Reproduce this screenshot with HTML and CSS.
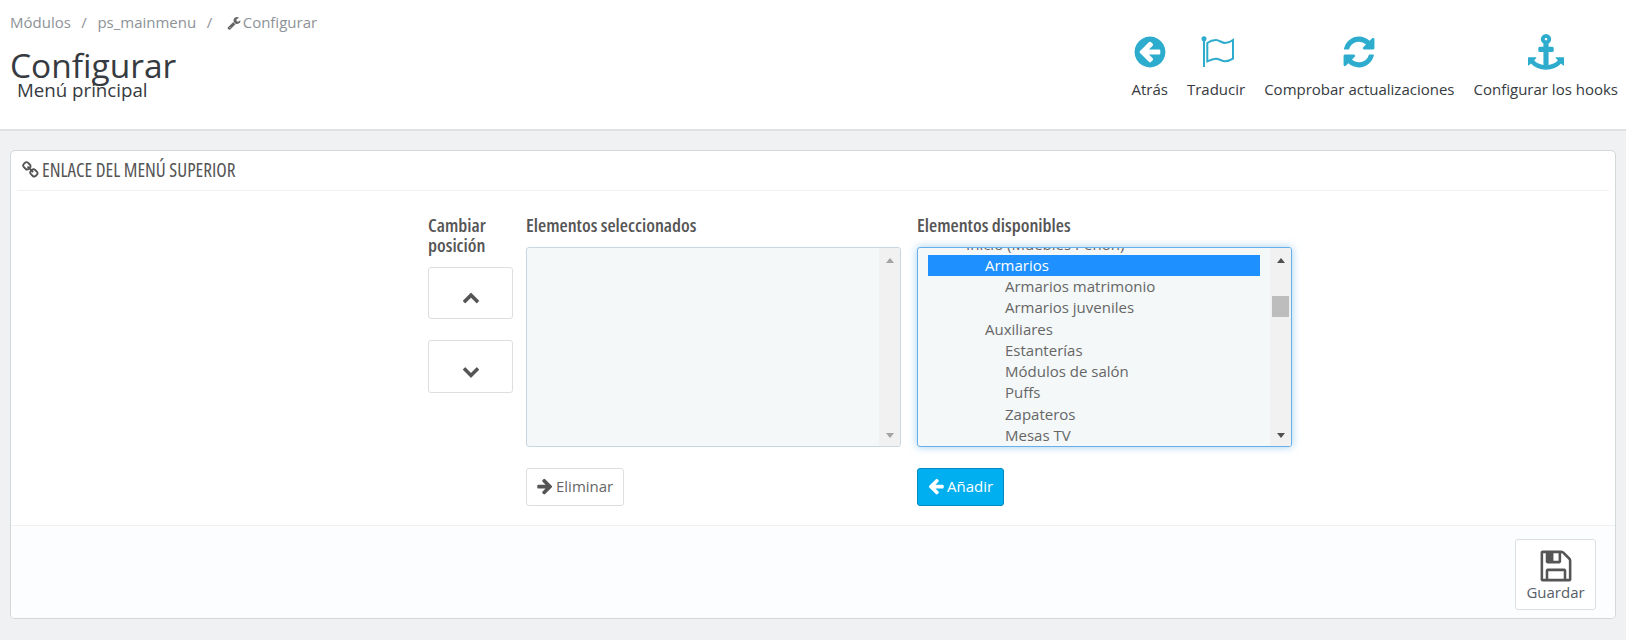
FILE: index.html
```html
<!DOCTYPE html>
<html lang="es">
<head>
<meta charset="utf-8">
<title>Configurar</title>
<link rel="stylesheet" href="styles.css">
</head>
<body>
<header class="page-head">
  <div class="head-left">
    <nav class="crumbs">
      <span>Módulos</span><span class="sep">/</span><span>ps_mainmenu</span><span class="sep">/</span>
      <span class="crumb-cur"><svg class="ico-wrench" viewBox="0 0 1792 1792"><path d="M448 1472q0-26-19-45t-45-19-45 19-19 45 19 45 45 19 45-19 19-45zm644-420l-682 682q-37 37-90 37-52 0-91-37l-106-108q-38-36-38-90 0-53 38-91l681-681q39 98 114.5 173.5t173.5 114.5zm634-435q0 39-23 106-47 134-164.5 217.5t-258.5 83.5q-185 0-316.5-131.5t-131.5-316.5 131.5-316.5 316.5-131.5q58 0 121.5 16.5t107.5 46.5q16 11 16 28t-16 28l-293 169v224l193 107q5-3 79-48.5t135.5-81 70.5-35.5q15 0 23.5 10t8.5 25z"/></svg>Configurar</span>
    </nav>
    <h1 class="title">Configurar</h1>
    <p class="subtitle">Menú principal</p>
  </div>
  <ul class="toolbar">
    <li class="tool">
      <svg class="tool-ico" viewBox="0 0 1792 1792"><path d="M1408 960v-128q0-26-19-45t-45-19h-502l189-189q19-19 19-45t-19-45l-91-91q-18-18-45-18t-45 18l-362 362-91 91q-18 18-18 45t18 45l91 91 362 362q18 18 45 18t45-18l91-91q18-18 18-45t-18-45l-189-189h502q26 0 45-19t19-45zm256-64q0 209-103 385.5t-279.5 279.5-385.5 103-385.5-103-279.5-279.5-103-385.5 103-385.5 279.5-279.5 385.5-103 385.5 103 279.5 279.5 103 385.5z"/></svg>
      <span>Atrás</span>
    </li>
    <li class="tool">
      <svg class="tool-ico" viewBox="0 0 36 36"><circle cx="6" cy="4.700" r="2.500" class="flag-dot"/><path class="flag-line" d="M6 5v28"/><path class="flag-line" d="M9.300 9C12 7 15 6 18 6s6 3 9 3 6-1.500 8-3v18.700c-2 1.300-5 2.600-8 2.600s-6-2.600-9-2.600-6 1.300-8.700 2.600z"/></svg>
      <span>Traducir</span>
    </li>
    <li class="tool">
      <svg class="tool-ico" viewBox="0 0 1792 1792"><path d="M1639 1056q0 5-1 7-64 268-268 434.5t-478 166.5q-146 0-282.5-55t-243.5-157l-129 129q-19 19-45 19t-45-19-19-45v-448q0-26 19-45t45-19h448q26 0 45 19t19 45-19 45l-137 137q71 66 161 102t187 36q134 0 250-65t186-179q11-17 53-117 8-23 30-23h192q13 0 22.500 9.500t9.500 22.500zm25-800v448q0 26-19 45t-45 19h-448q-26 0-45-19t-19-45 19-45l138-138q-148-137-349-137-134 0-250 65t-186 179q-11 17-53 117-8 23-30 23h-199q-13 0-22.500-9.500t-9.500-22.500v-7q65-268 270-434.500t480-166.500q146 0 284 55.500t245 156.500l130-129q19-19 45-19t45 19 19 45z"/></svg>
      <span>Comprobar actualizaciones</span>
    </li>
    <li class="tool">
      <svg class="tool-ico" viewBox="0 0 1792 1792"><path d="M960 256q0-26-19-45t-45-19-45 19-19 45 19 45 45 19 45-19 19-45zm832 928v352q0 22-20 30-8 2-12 2-12 0-23-9l-93-93q-119 143-318.500 226.500t-429.500 83.500-429.500-83.500-318.500-226.500l-93 93q-9 9-23 9-4 0-12-2-20-8-20-30v-352q0-14 9-23t23-9h352q22 0 30 20 8 19-7 35l-100 100q67 91 189.500 153.500t271.500 82.500v-647h-192q-26 0-45-19t-19-45v-128q0-26 19-45t45-19h192v-163q-58-34-93-92.500t-35-128.500q0-106 75-181t181-75 181 75 75 181q0 70-35 128.500t-93 92.500v163h192q26 0 45 19t19 45v128q0 26-19 45t-45 19h-192v647q149-20 271.500-82.500t189.500-153.500l-100-100q-15-16-7-35 8-20 30-20h352q14 0 23 9t9 23z"/></svg>
      <span>Configurar los hooks</span>
    </li>
  </ul>
</header>

<main class="content">
  <section class="panel">
    <div class="panel-head">
      <svg class="ico-link" viewBox="0 0 1792 1792"><path d="M1456 1216q0-40-28-68l-208-208q-28-28-68-28-42 0-72 32 3 3 19 18.500t21.500 21.500 15 19 13 25.500 3.500 27.500q0 40-28 68t-68 28q-15 0-27.500-3.500t-25.500-13-19-15-21.500-21.500-18.500-19q-33 31-33 73 0 40 28 68l206 207q27 27 68 27 40 0 68-26l147-146q28-28 28-67zm-703-705q0-40-28-68l-206-207q-28-28-68-28-39 0-68 27l-147 146q-28 28-28 67 0 40 28 68l208 208q27 27 68 27 42 0 72-31-3-3-19-18.500t-21.500-21.500-15-19-13-25.500-3.500-27.500q0-40 28-68t68-28q15 0 27.500 3.500t25.500 13 19 15 21.500 21.500 18.500 19q33-31 33-73zm895 705q0 120-85 203l-147 146q-83 83-203 83-121 0-204-85l-206-207q-83-83-83-203 0-123 88-209l-88-88q-86 88-208 88-120 0-204-84l-208-208q-84-84-84-204t85-203l147-146q83-83 203-83 121 0 204 85l206 207q83 83 83 203 0 123-88 209l88 88q86-88 208-88 120 0 204 84l208 208q84 84 84 204z"/></svg>
      <span>ENLACE DEL MENÚ SUPERIOR</span>
    </div>
    <div class="panel-body">
      <div class="col-move">
        <div class="col-label">Cambiar posición</div>
        <button class="move-btn" type="button"><svg class="ico-chev" viewBox="0 0 1792 1792"><path d="M1683 1331l-166 165q-19 19-45 19t-45-19l-531-531-531 531q-19 19-45 19t-45-19l-166-165q-19-19-19-45.500t19-45.500l742-741q19-19 45-19t45 19l742 741q19 19 19 45.500t-19 45.500z"/></svg></button>
        <button class="move-btn" type="button"><svg class="ico-chev" viewBox="0 0 1792 1792"><path d="M1683 808l-742 741q-19 19-45 19t-45-19l-742-741q-19-19-19-45.500t19-45.500l166-165q19-19 45-19t45 19l531 531 531-531q19-19 45-19t45 19l166 165q19 19 19 45.500t-19 45.500z"/></svg></button>
      </div>
      <div class="col-list">
        <div class="list-label">Elementos seleccionados</div>
        <div class="listbox">
          <div class="list-view"></div>
          <div class="sb sb-off"><span class="sb-up"></span><span class="sb-down"></span></div>
        </div>
        <button class="btn" type="button"><svg class="ico-arrow" viewBox="0 0 1792 1792"><path d="M1600 960q0 54-37 91l-651 651q-39 37-91 37-51 0-90-37l-75-75q-38-38-38-91t38-91l293-293h-704q-52 0-84.500-37.500t-32.500-90.500v-128q0-53 32.500-90.500t84.500-37.500h704l-293-294q-38-36-38-90t38-90l75-75q38-38 90-38 53 0 91 38l651 651q37 35 37 90z"/></svg>Eliminar</button>
      </div>
      <div class="col-list">
        <div class="list-label">Elementos disponibles</div>
        <div class="listbox listbox-focus">
          <ul class="list-view options">
            <li class="lvl1">Inicio (Muebles Peñón)</li>
            <li class="lvl2 selected">Armarios</li>
            <li class="lvl3">Armarios matrimonio</li>
            <li class="lvl3">Armarios juveniles</li>
            <li class="lvl2">Auxiliares</li>
            <li class="lvl3">Estanterías</li>
            <li class="lvl3">Módulos de salón</li>
            <li class="lvl3">Puffs</li>
            <li class="lvl3">Zapateros</li>
            <li class="lvl3">Mesas TV</li>
          </ul>
          <div class="sb"><span class="sb-up"></span><span class="sb-thumb"></span><span class="sb-down"></span></div>
        </div>
        <button class="btn btn-primary" type="button"><svg class="ico-arrow" viewBox="0 0 1792 1792"><path d="M1664 896v128q0 53-32.500 90.500t-84.500 37.500h-704l293 294q38 36 38 90t-38 90l-75 76q-37 37-90 37-52 0-91-37l-651-652q-37-37-37-90 0-52 37-91l651-650q38-38 91-38 52 0 90 38l75 74q38 38 38 91t-38 91l-293 293h704q52 0 84.500 37.500t32.500 90.500z"/></svg>Añadir</button>
      </div>
    </div>
    <div class="panel-foot">
      <button class="save-btn" type="button">
        <svg class="ico-save" viewBox="0 0 1792 1792"><path d="M512 1536h768v-384h-768v384zm896 0h128v-896q0-14-10-38.500t-20-34.500l-281-281q-10-10-34-20t-39-10v416q0 40-28 68t-68 28h-576q-40 0-68-28t-28-68v-416h-128v1280h128v-416q0-40 28-68t68-28h832q40 0 68 28t28 68v416zm-384-928v-320q0-13-9.500-22.500t-22.500-9.500h-192q-13 0-22.500 9.500t-9.500 22.500v320q0 13 9.500 22.500t22.500 9.500h192q13 0 22.500-9.500t9.500-22.500zm640 32v928q0 40-28 68t-68 28h-1344q-40 0-68-28t-28-68v-1344q0-40 28-68t68-28h928q40 0 88 20t76 48l280 280q28 28 48 76t20 88z"/></svg>
        <span>Guardar</span>
      </button>
    </div>
  </section>
</main>
</body>
</html>
```
FILE: styles.css
```css
* { box-sizing: border-box; }
html, body { margin: 0; padding: 0; }
body {
  width: 1626px;
  height: 640px;
  overflow: hidden;
  background: #eff1f2;
  color: #363a41;
  font-family: "Open Sans", sans-serif;
  font-size: 15px;
}
ul { list-style: none; margin: 0; padding: 0; }

.page-head {
  height: 131px;
  background: #fff;
  border-bottom: 2px solid #dfe1e2;
  display: flex;
  justify-content: space-between;
  padding: 12px 8px 0 10px;
}
.crumbs {
  display: flex;
  align-items: center;
  height: 21px;
  color: #8d9298;
  line-height: 21px;
}
.sep { margin: 0 10.500px; color: #8d9298; }
.crumb-cur { margin-left: 4px; display: flex; align-items: center; }
.ico-wrench { width: 14px; height: 14px; fill: #666; margin-right: 2px; }
.title {
  margin: 12px 0 0;
  font-size: 33.500px;
  line-height: 40px;
  font-weight: 400;
  color: #363a41;
}
.subtitle {
  margin: -7px 0 0 7px;
  font-size: 18.700px;
  line-height: 24px;
  color: #363a41;
}
.toolbar {
  display: flex;
  gap: 19px;
  padding-top: 22px;
}
.tool {
  display: flex;
  flex-direction: column;
  align-items: center;
  color: #363a41;
  font-size: 15px;
  line-height: 20px;
}
.tool-ico { width: 36px; height: 36px; fill: #2eacce; margin-bottom: 9px; }
.flag-line { fill: none; stroke: #2eacce; stroke-width: 2; }
.flag-dot { fill: #2eacce; }

.content { padding: 19px 10px 0; }
.panel {
  height: 469px;
  background: #fff;
  border: 1px solid #d3d8db;
  border-radius: 5px;
  display: flex;
  flex-direction: column;
  overflow: hidden;
}
.panel-head {
  height: 40px;
  margin: 0 6px;
  border-bottom: 1px solid #eff1f2;
  display: flex;
  align-items: center;
  padding: 0 0 2px 5px;
  color: #555;
  font-family: "Open Sans", sans-serif;
  font-stretch: condensed;
  font-size: 19.200px;
}
.ico-link { width: 18px; height: 18px; fill: #555; margin-right: 2px; }
.panel-body {
  flex: 1;
  display: flex;
  padding: 24px 0 0 417px;
}
.col-move { width: 85px; margin-right: 13px; }
.col-label, .list-label {
  font-family: "Open Sans", sans-serif;
  font-stretch: condensed;
  font-weight: 600;
  font-size: 18.800px;
  line-height: 20px;
  color: #555;
}
.col-label { width: 70px; }
.move-btn {
  display: flex;
  align-items: flex-end;
  justify-content: center;
  width: 85px;
  height: 52px;
  margin-top: 12px;
  padding: 0 0 12px;
  background: #fff;
  border: 1px solid #dcdfe1;
  border-radius: 3px;
}
.move-btn + .move-btn { margin-top: 21px; height: 53px; }
.ico-chev { width: 18px; height: 18px; fill: #555; }
.col-list { width: 375px; margin-right: 16px; }
.list-label { height: 32px; }
.listbox {
  display: flex;
  height: 200px;
  background: #f4f8f9;
  border: 1px solid #c7d6e0;
  border-radius: 3px;
  overflow: hidden;
}
.listbox-focus {
  border-color: #66afe9;
  box-shadow: 0 0 8px rgba(102, 175, 233, .6);
}
.list-view { flex: 1; min-width: 0; overflow: hidden; }
.options { padding: 0 10px; margin-top: -14.400px; }
.options li {
  height: 21.250px;
  line-height: 21px;
  font-size: 15px;
  color: #666;
  white-space: nowrap;
}
.lvl1 { padding-left: 38px; }
.lvl2 { padding-left: 57px; }
.lvl3 { padding-left: 77px; }
.options .selected { background: #1e90ff; color: #fff; }
.sb {
  width: 21px;
  flex: none;
  background: #f1f1f1;
  display: flex;
  flex-direction: column;
  align-items: center;
  padding-top: 10px;
}
.sb-up, .sb-down {
  width: 0;
  height: 0;
  border-left: 4.500px solid transparent;
  border-right: 4.500px solid transparent;
}
.sb-up { border-bottom: 5px solid #505050; }
.sb-down { border-top: 5px solid #505050; margin-top: auto; margin-bottom: 8px; }
.sb-off .sb-up { border-bottom-color: #a3a3a3; }
.sb-off .sb-down { border-top-color: #a3a3a3; }
.sb-thumb {
  width: 17px;
  height: 21px;
  margin-top: 33px;
  background: #bdbdbd;
}
.btn {
  display: inline-flex;
  align-items: center;
  height: 38px;
  margin-top: 21px;
  padding: 0 10px 2px 9px;
  background: #fff;
  border: 1px solid #dcdfe1;
  border-radius: 3px;
  color: #666;
  font-family: "Open Sans", sans-serif;
  font-size: 15px;
}
.btn-primary {
  background: #00aff0;
  border-color: #008abd;
  color: #fff;
}
.ico-arrow { width: 18px; height: 18px; fill: #555; margin-right: 2px; }
.btn-primary .ico-arrow { fill: #fff; }
.panel-foot {
  height: 93px;
  background: #fcfdfe;
  border-top: 1px solid #eff1f2;
  display: flex;
  justify-content: flex-end;
  padding: 13px 19px 0 0;
}
.save-btn {
  display: flex;
  flex-direction: column;
  align-items: center;
  width: 81px;
  height: 71px;
  padding: 8px 0 0;
  background: #fff;
  border: 1px solid #dcdfe1;
  border-radius: 3px;
  color: #555e68;
  font-family: "Open Sans", sans-serif;
  font-size: 15px;
  line-height: 20px;
}
.ico-save { width: 36px; height: 36px; fill: #555; margin-bottom: -2px; }
```
